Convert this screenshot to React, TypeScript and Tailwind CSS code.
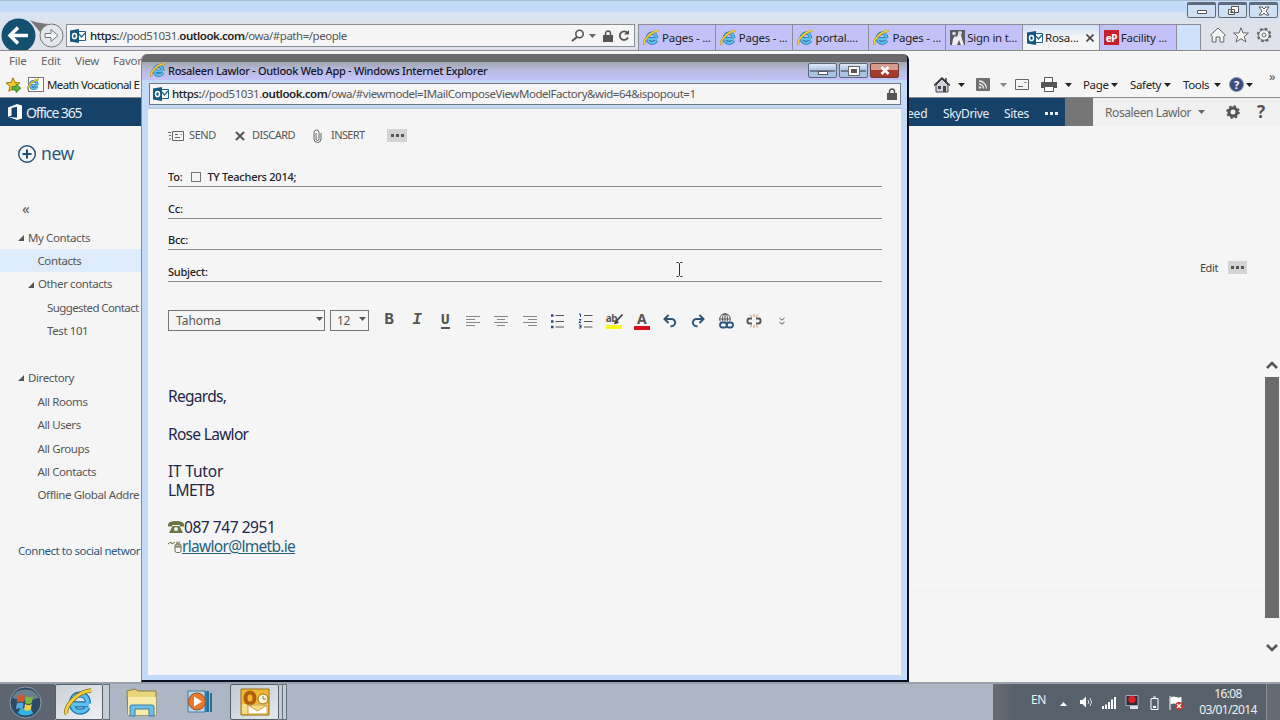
import React, { ReactNode } from "react";
import clsx from "clsx";

const Caret = ({ className = "" }: { className?: string }) => (
  <svg viewBox="0 0 7 4" className={clsx("w-[7px] h-1 shrink-0 fill-current", className)}>
    <path d="M0 0h7L3.5 4z" />
  </svg>
);

const IEIcon = ({ className = "" }: { className?: string }) => (
  <svg viewBox="0 0 32 32" className={clsx("shrink-0", className)} fill="none">
    <path d="M8.5 18.5H26M25.5 17.5c0-6-3.600-9.500-8.500-9.500S8.500 11.700 8.500 17s3.500 9.300 8.700 9.300c3.800 0 6.600-1.700 7.900-4.600" stroke="#1b6fa6" strokeWidth="6.500" />
    <path d="M8.500 18.500H26M25.500 17.500c0-6-3.600-9.500-8.500-9.500S8.500 11.700 8.500 17s3.500 9.300 8.700 9.300c3.800 0 6.600-1.700 7.900-4.600" stroke="#5cc0ee" strokeWidth="4" />
    <path d="M3 29C-1 24 12 5 29 3.500" stroke="#8a7420" strokeWidth="4.500" />
    <path d="M3 29C-1 24 12 5 29 3.500" stroke="#f3cf3c" strokeWidth="3" />
  </svg>
);

const OutlookIcon = () => (
  <svg viewBox="0 0 16 14" className="w-4 h-3.5 shrink-0">
    <path d="M8 2.500h7.500v9H8z" fill="#fff" stroke="#1c6390" />
    <path d="M9 5l2.500 3L15 4" fill="none" stroke="#1c6390" strokeWidth="1.200" />
    <path d="M0 1.500L9 0v14L0 12.500z" fill="#14587f" />
    <ellipse cx="4.500" cy="7" rx="2" ry="2.600" fill="none" stroke="#fff" strokeWidth="1.500" />
  </svg>
);

const Lock = () => (
  <svg viewBox="0 0 10 12" className="w-2.5 h-3 shrink-0">
    <path d="M2.500 6V3.500a2.500 2.500 0 015 0V6" fill="none" stroke="#555" strokeWidth="1.500" />
    <path d="M0 5h10v7H0z" fill="#555" />
  </svg>
);

const Dots = ({ className = "" }: { className?: string }) => (
  <span className={clsx("flex items-center justify-center gap-[2px]", className)}>
    <i className="size-[3px] bg-current" />
    <i className="size-[3px] bg-current" />
    <i className="size-[3px] bg-current" />
  </span>
);

const tabs = [
  { icon: "ie", label: "Pages - ..." },
  { icon: "ie", label: "Pages - ..." },
  { icon: "ie", label: "portal...." },
  { icon: "ie", label: "Pages - ..." },
  { icon: "people", label: "Sign in t..." },
  { icon: "outlook", label: "Rosa...", active: true },
  { icon: "ep", label: "Facility ..." },
];

function TabIcon({ icon }: { icon: string }) {
  if (icon === "ie") return <IEIcon className="w-[17px] h-[17px]" />;
  if (icon === "outlook") return <OutlookIcon />;
  if (icon === "people")
    return (
      <svg viewBox="0 0 15 15" className="w-[15px] h-[15px] shrink-0">
        <path d="M0 0h15v15H0z" fill="#5a5a62" />
        <path d="M2 15l1-6 2-3 2 1 1-3 3 1 1 4 2 6h-3l-2-5-2 5z" fill="#eee" />
        <circle cx="4" cy="3.500" r="1.800" fill="#ddd" />
        <circle cx="10" cy="3" r="2" fill="#ddd" />
      </svg>
    );
  return (
    <span className="w-[15px] h-[15px] shrink-0 bg-[#c5202c] text-white text-[10px] leading-[17px] font-bold text-center tracking-[-0.5px]">
      eP
    </span>
  );
}

function BrowserChrome() {
  return (
    <>
      <div className="h-3 border-t border-[#a9bccf] bg-[#c1dbf9]" />
      <div className="h-[39px] flex bg-gradient-to-b from-[#d6e3f3] to-[#dfe2ea] to-40% border-b border-[#8c8c8c]">
        <svg viewBox="0 0 66 38" className="w-[66px] h-[38px] shrink-0">
          <path d="M30 8c6 3 11 3 19 4l-9 8z" fill="#777" />
          <circle cx="18.500" cy="23.500" r="17" fill="#14506f" />
          <path d="M28 23.500H11M18 15.500l-8 8 8 8" fill="none" stroke="#fff" strokeWidth="3.500" />
          <circle cx="51.500" cy="23.500" r="11.500" fill="#e4e7ec" stroke="#777" />
          <path d="M45 21.500h6v-4l7 6-7 6v-4h-6z" fill="#f4f4f4" stroke="#777" />
        </svg>
        <div className="mt-3 w-[569px] h-[23px] border border-[#888e96] bg-[#f5f5f5] flex items-center pl-[3px] pr-[4px]">
          <OutlookIcon />
          <span className="ml-1 flex-1 text-[11.500px] text-[#555] tracking-[-0.480px]">
            <b className="font-medium text-[#222]">https:</b>//pod51031.<b className="font-semibold text-[#222]">outlook.com</b>/owa/#path=/people
          </span>
          <svg viewBox="0 0 14 13" className="w-3.5 h-[13px] shrink-0">
            <circle cx="8.500" cy="5" r="3.700" fill="none" stroke="#555" strokeWidth="1.600" />
            <path d="M6 8l-5 4" stroke="#555" strokeWidth="2" />
          </svg>
          <Caret className="ml-1 text-[#666]" />
          <span className="w-[7px]" />
          <Lock />
          <svg viewBox="0 0 12 12" className="ml-[5px] w-3 h-3 shrink-0" fill="none">
            <path d="M9.500 3A4.300 4.300 0 1010 7.500" stroke="#555" strokeWidth="1.800" />
            <path d="M6 4.500h5V0z" fill="#555" />
          </svg>
        </div>
        <div className="mt-3 ml-[3px] h-[26px] flex">
          {tabs.map((tab, i) => (
            <div
              key={i}
              className={clsx(
                "w-[76.800px] border-l border-t border-[#8c8c98] flex items-center pl-1",
                tab.active ? "bg-gradient-to-b from-[#cfe0f8] to-[#f5f5f5] to-50%" : "bg-[#c3c2f8]"
              )}
            >
              <TabIcon icon={tab.icon} />
              <span className="ml-[2px] text-[11.500px] text-[#222] tracking-[-0.250px] whitespace-nowrap">{tab.label}</span>
              {tab.active && (
                <svg viewBox="0 0 8 8" className="ml-auto mr-[5px] w-2 h-2 shrink-0">
                  <path d="M.5.5l7 7M7.500.5l-7 7" stroke="#444" strokeWidth="1.600" />
                </svg>
              )}
            </div>
          ))}
          <div className="w-[25px] border border-b-0 border-[#8c8c98] bg-[#cfe2fb]" />
        </div>
        <svg viewBox="0 0 66 16" className="mt-[15px] ml-[9px] w-[66px] h-4 shrink-0" fill="#f5f5f5" stroke="#666">
          <path d="M.7 8L8 1l7.300 7-1.500 1.200V15H10v-5H6v5H2.200V9.200z" />
          <path d="M31 .8l2 5.200h5.500l-4.300 3.500L36 15l-5-3.300L26 15l1.700-5.500L23.500 6H29z" />
          <circle cx="54" cy="8" r="6" strokeWidth="2.500" strokeDasharray="2.700 2" />
          <circle cx="54" cy="8" r="5.300" />
          <circle cx="54" cy="8" r="2" />
        </svg>
      </div>
      <div className="h-[22px] flex items-center pl-[9px] pb-[2px] bg-[#f5f5f5] text-[11.500px] text-[#666] tracking-[-0.250px]">
        <span className="w-8">File</span>
        <span className="w-[34px]">Edit</span>
        <span className="w-[38px]">View</span>
        <span>Favor</span>
      </div>
      <div className="h-[25px] flex items-center pb-px bg-[#f5f5f5] border-b border-[#8a8a8a] text-[11.500px] text-[#222] tracking-[-0.350px]">
        <svg viewBox="0 0 16 16" className="ml-[5px] w-4 h-4 shrink-0">
          <path d="M8 .8l2 4.700 5 .4-4 3.400 1.200 5L8 11.700 3.800 14.300 5 9.300 1 5.900l5-.4z" fill="#f4c933" stroke="#97760f" />
          <path d="M7 9.500h4V7l5 4.200-5 4.300V13H7z" fill="#56b33c" stroke="#2f7220" strokeWidth=".7" />
        </svg>
        <span className="ml-[7px] w-4 h-[15px] bg-white border border-[#777] flex items-center">
          <IEIcon className="w-[13px] h-[13px] -ml-0.5" />
        </span>
        <span className="ml-[3px] w-[95px] whitespace-nowrap tracking-[-0.600px]">Meath Vocational E</span>
        <svg viewBox="0 0 16 16" className="ml-[792px] w-4 h-4 shrink-0">
          <path d="M2 8l6-6 6 6v7H2z" fill="#cfd2dc" stroke="#444" />
          <path d="M0 8.500L8 1l8 7.500M12 1v4" fill="none" stroke="#333" strokeWidth="1.500" />
          <path d="M9 9h3v6H9zM4 9h3v3H4z" fill="#444" />
        </svg>
        <Caret className="ml-2 text-[#222]" />
        <svg viewBox="0 0 14 13" className="ml-[11px] w-3.5 h-[13px] shrink-0" fill="none" stroke="#eee">
          <rect width="14" height="13" rx="1" fill="#707070" stroke="none" />
          <path d="M3 6a4.500 4.500 0 014.500 4.500M3 3a7.500 7.500 0 017.500 7.500" strokeWidth="1.300" />
          <circle cx="4" cy="9.500" r=".8" fill="#eee" />
        </svg>
        <Caret className="ml-[10px] text-[#888]" />
        <svg viewBox="0 0 14 11" className="ml-2 w-3.5 h-[11px] shrink-0" fill="none" stroke="#666">
          <path d="M.5.5h13v10H.5zM3 7.500h5M9.500 3.500h2" />
        </svg>
        <svg viewBox="0 0 16 15" className="ml-3 w-4 h-[15px] shrink-0">
          <path d="M3.500.5h8v5h-8z" fill="#fff" stroke="#555" />
          <path d="M0 5h16v6H0z" fill="#555" />
          <path d="M3.500 9.500h9v5h-9z" fill="#fff" stroke="#555" />
        </svg>
        <Caret className="ml-2" />
        <span className="ml-[11px] w-[28px]">Page</span>
        <Caret />
        <span className="ml-3 w-[34px]">Safety</span>
        <Caret />
        <span className="ml-3 w-[31px]">Tools</span>
        <Caret />
        <span className="ml-2 size-[15px] rounded-full bg-[#3b4d80] border border-[#8a93a8] text-white text-[11px] leading-[13px] font-bold text-center">?</span>
        <Caret className="ml-[2px]" />
        <span className="ml-4 -mt-4 text-[13px] text-[#555]">»</span>
      </div>
    </>
  );
}

function SuiteBar() {
  return (
    <div className="h-7 flex bg-[#f0f0f0] text-[12px]">
      <div className="w-[1065px] pt-[3px] bg-[#16426a] text-[#e8eef4] flex items-center">
        <svg viewBox="0 0 14 16" className="ml-2 mb-[3px] w-3.5 h-4 shrink-0">
          <path d="M0 3.500L9 0l5 1.500v13L9 16 0 12.700l9 1V2.800L3.500 4v7.500L0 12.700z" fill="#fff" />
        </svg>
        <span className="ml-1 mb-[2px] w-[877px] text-[14px] tracking-[-1.100px]">Office 365</span>
        <span className="ml-1 w-[36px] tracking-[-0.200px]">eed</span>
        <span className="w-[61px] tracking-[-0.350px]">SkyDrive</span>
        <span className="w-[41px] tracking-[-0.300px]">Sites</span>
        <Dots />
      </div>
      <div className="w-7 bg-[#767676]" />
      <span className="ml-3 w-[93px] leading-[29px] text-[12px] text-[#666] tracking-[-0.400px]">Rosaleen Lawlor</span>
      <Caret className="mt-3 text-[#666]" />
      <svg viewBox="0 0 14 14" className="mt-[7px] ml-[21px] w-3.5 h-3.5 shrink-0" fill="none" stroke="#555">
        <circle cx="7" cy="7" r="4" strokeWidth="3" />
        <circle cx="7" cy="7" r="5.800" strokeWidth="2" strokeDasharray="2.300 2.250" />
      </svg>
      <span className="ml-[17px] text-[17px] leading-[27px] font-bold text-[#555]">?</span>
    </div>
  );
}

interface FolderRow {
  label?: string;
  indent: string;
  header?: boolean;
  selected?: boolean;
}

const folders: FolderRow[] = [
  { label: "My Contacts", indent: "pl-[18px]", header: true },
  { label: "Contacts", indent: "pl-[37.500px]", selected: true },
  { label: "Other contacts", indent: "pl-7", header: true },
  { label: "Suggested Contact", indent: "pl-[47px]" },
  { label: "Test 101", indent: "pl-[47px]" },
  { indent: "" },
  { label: "Directory", indent: "pl-[18px]", header: true },
  { label: "All Rooms", indent: "pl-[37.500px]" },
  { label: "All Users", indent: "pl-[37.500px]" },
  { label: "All Groups", indent: "pl-[37.500px]" },
  { label: "All Contacts", indent: "pl-[37.500px]" },
  { label: "Offline Global Addre", indent: "pl-[37.500px]" },
];

function Sidebar() {
  return (
    <div className="w-[141px] whitespace-nowrap flex flex-col text-[11.500px] tracking-[-0.400px] text-[#555]">
      <div className="mt-3 ml-[18px] h-8 flex items-center text-[#2c5a7c]">
        <svg viewBox="0 0 18 18" className="w-[18px] h-[18px]" fill="none" stroke="#1c5078">
          <circle cx="9" cy="9" r="8.300" strokeWidth="1.400" />
          <path d="M9 4.500v9M4.500 9h9" strokeWidth="2" />
        </svg>
        <span className="ml-[5px] mb-[2px] text-[17.500px] tracking-[-0.400px]">new</span>
      </div>
      <span className="mt-[28px] ml-[22px] h-[22px] text-[15px] leading-[20px]">«</span>
      <div className="mt-[5.500px]">
        {folders.map((f, i) => (
          <div
            key={i}
            className={clsx(
              "h-[23.450px] flex items-center",
              f.indent,
              f.selected && "bg-[#deebfa]",
              f.label === "Suggested Contact" && "tracking-[-0.600px]"
            )}
          >
            {f.header && (
              <svg viewBox="0 0 6 6" className="w-1.5 h-1.5 mr-1 mt-px fill-[#555]">
                <path d="M6 0v6H0z" />
              </svg>
            )}
            {f.label}
          </div>
        ))}
      </div>
      <span className="mt-[35px] ml-[18px] text-[#2c5a7c] tracking-[-0.480px]">Connect to social networ</span>
    </div>
  );
}

function ContactPane() {
  return (
    <div className="flex-1 flex">
      <div className="flex-1 flex flex-col">
        <div className="h-[268px] pt-[133px] flex justify-end border-b border-[#f1f1f1]">
          <span className="text-[11px] leading-[17px] tracking-[-0.400px] text-[#444]">Edit</span>
          <Dots className="ml-[10px] mr-[17px] w-[19px] h-[13px] bg-[#d4d4d4] text-[#555] mt-[2px]" />
        </div>
        {[0, 1, 2, 3, 4].map((i) => (
          <div key={i} className="h-[49.500px] border-b border-[#f1f1f1]" />
        ))}
      </div>
      <div className="w-4 flex flex-col items-center pt-[235px]">
        <svg viewBox="0 0 12 8" className="w-3 h-2">
          <path d="M1 7l5-5 5 5" fill="none" stroke="#555" strokeWidth="2.600" />
        </svg>
        <div className="mt-2 w-3.5 h-[241px] bg-[#6b6b6b]" />
        <svg viewBox="0 0 12 8" className="mt-[26px] w-3 h-2">
          <path d="M1 1l5 5 5-5" fill="none" stroke="#555" strokeWidth="2.600" />
        </svg>
      </div>
    </div>
  );
}

function Taskbar() {
  return (
    <div className="h-[38px] flex border-t-2 border-[#98a0aa] bg-[#acb6c4]">
      <div className="w-[55px] bg-[#5c6570] flex items-center justify-center">
        <svg viewBox="0 0 34 34" className="ml-[-4px] w-[33px] h-[33px]">
          <circle cx="17" cy="17" r="16" fill="#2b4a63" stroke="#93a1ad" />
          <path d="M3 12a15 13 0 0128 0q-14 6-28 0z" fill="#8596a4" opacity=".7" />
          <path d="M9 28a16 16 0 0016 0l-3-5H12z" fill="#2fb4e3" />
          <path d="M9 10q4-2 7 0l-1 7q-4-2-7 0z" fill="#d9572b" />
          <path d="M17.500 10.500q4 2 7 0l-1 7q-4 2-7 0z" fill="#83b63c" />
          <path d="M8 18q4-2 7 0l-1 6q-4-2-7 0z" fill="#55a7dd" />
          <path d="M16.500 18.500q4 2 7 0l-1 6q-4 2-7 0z" fill="#f1cd4c" />
        </svg>
      </div>
      <div className="w-12 border border-[#555e69] rounded-xs bg-gradient-to-br from-[#cbd1d9] to-[#eef1f5] flex items-center justify-center">
        <IEIcon className="w-[30px] h-[30px]" />
      </div>
      <div className="w-[7px] border border-l-0 border-[#66707c] bg-[#c4ccd7]" />
      <svg viewBox="0 0 32 30" className="ml-4 mt-1 w-8 h-[30px] shrink-0">
        <path d="M1 3l8-2 3 2h18v24H2z" fill="#e9d57a" stroke="#8f7d39" />
        <path d="M2 9h28v18H2z" fill="#f7ecaa" />
        <path d="M4 28v-9q0-2 2-2h20q2 0 2 2v9h-5v-7H9v7z" fill="#70bde6" stroke="#3c7da3" />
      </svg>
      <svg viewBox="0 0 28 26" className="ml-[28px] mt-[5px] w-7 h-[26px] shrink-0">
        <path d="M8 2h14v21H8z" fill="#2f7fae" />
        <path d="M22 2v21M25 4v19" stroke="#2c6d98" strokeWidth="2" />
        <path d="M2 2h17v21H2z" fill="#b9d9ea" stroke="#3c7da3" />
        <circle cx="11" cy="12.500" r="8.500" fill="#e77a2c" stroke="#a64e17" />
        <path d="M8 7.500l8 5-8 5z" fill="#fff" />
      </svg>
      <div className="ml-[16px] w-[49px] border border-[#555e69] rounded-xs bg-gradient-to-br from-[#c3cad3] to-[#e4e8ee] flex items-center justify-center">
        <svg viewBox="0 0 30 28" className="w-[30px] h-7">
          <path d="M1 1h28v26H1z" fill="#f0b935" stroke="#9a6f10" />
          <path d="M2 16h26v10H2z" fill="#f8dc85" />
          <ellipse cx="10" cy="10" rx="4.500" ry="5.500" fill="none" stroke="#b35c0c" strokeWidth="4" />
          <circle cx="23" cy="11" r="5" fill="#fff4d4" stroke="#9a6f10" />
          <path d="M23 8v3h3" fill="none" stroke="#775" />
          <path d="M8 17h19v9H8zM8 17l9.500 6L27 17" fill="#fff" stroke="#c99a3c" />
        </svg>
      </div>
      <div className="w-1 border-y border-r border-[#66707c] bg-[#c4ccd7]" />
      <div className="w-1 border-y border-r border-[#66707c] bg-[#c4ccd7]" />
      <div className="ml-auto w-[287px] flex items-center bg-gradient-to-r from-[#6b6c70] to-[#57616c] to-8% text-[#eef0f2]">
        <span className="ml-[38px] mb-1 w-[29px] text-[12px] tracking-[-0.400px]">EN</span>
        <svg viewBox="0 0 7 4" className="w-[7px] h-1 fill-white mt-1">
          <path d="M0 4h7L3.500 0z" />
        </svg>
        <svg viewBox="0 0 14 12" className="ml-[13px] w-3.5 h-3 shrink-0" fill="none" stroke="#ddd">
          <path d="M0 4h2.500L6 .5v11L2.500 8H0z" fill="#fff" stroke="none" />
          <path d="M8 4q1.500 2 0 4M10 2q3 4 0 8" />
        </svg>
        <svg viewBox="0 0 14 12" className="ml-2 mt-px w-3.5 h-3 shrink-0" fill="#fff">
          <path d="M0 9h2v3H0zM3 7.500h2V12H3zM6 5h2v7H6zM9 2.500h2V12H9zM12 0h2v12h-2z" />
        </svg>
        <svg viewBox="0 0 14 14" className="ml-[9px] w-3.5 h-3.5 shrink-0">
          <path d="M1 .5h12v10H1z" fill="#222c3c" stroke="#aab" />
          <circle cx="7" cy="4.500" r="3.700" fill="#e02028" />
          <path d="M5 11h8v3H5z" fill="#dde" />
        </svg>
        <svg viewBox="0 0 9 14" className="ml-[11px] mt-px w-[9px] h-3.5 shrink-0" fill="none" stroke="#fff">
          <path d="M1 2.500h7v11H1zM3 1h3" />
          <path d="M3 11h3" strokeWidth="2" />
        </svg>
        <svg viewBox="0 0 14 14" className="ml-[10px] mt-px w-3.5 h-3.5 shrink-0">
          <path d="M1 0v14M2 1.500q3-1 5 0t5 0v6q-3 1-5 0t-5 0z" fill="#fff" stroke="#fff" />
          <circle cx="10" cy="10" r="4" fill="#cf2e2e" />
          <path d="M8 8l4 4M12 8l-4 4" stroke="#fff" strokeWidth="1.300" />
        </svg>
        <div className="ml-[15px] w-[60px] text-center text-[12px] leading-[16px] tracking-[-0.650px] whitespace-nowrap">
          <div>16:08</div>
          <div>03/01/2014</div>
        </div>
        <div className="ml-auto w-3.5 h-full border-l border-[#8a919a] bg-[#666b73]" />
      </div>
    </div>
  );
}

const Glyph = ({ children }: { children: ReactNode }) => (
  <svg viewBox="0 0 16 16" className="w-4 h-4" fill="none" stroke="#555">
    {children}
  </svg>
);

const formatTools: ReactNode[] = [
  <b className="text-[16px] leading-[16px]">B</b>,
  <b className="text-[16px] leading-[16px] italic">I</b>,
  <b className="mt-[3px] text-[15px] leading-[13px] border-b-2 border-[#555]">U</b>,
  <Glyph><path d="M1 3.500h14M1 6.500h9M1 9.500h14M1 12.500h9" stroke="#888" /></Glyph>,
  <Glyph><path d="M1 3.500h14M4 6.500h8M1 9.500h14M4 12.500h8" stroke="#888" /></Glyph>,
  <Glyph><path d="M1 3.500h14M6 6.500h9M1 9.500h14M6 12.500h9" stroke="#888" /></Glyph>,
  <Glyph>
    <path d="M5.500 2.500H14M5.500 8.500H14M5.500 14H14" />
    <path d="M1 2.500h2.500M1 8.500h2.500M1 14h2.500" stroke="#2b4c7a" strokeWidth="2.500" />
  </Glyph>,
  <Glyph>
    <path d="M6 2.500h8.500M6 8.500h8.500M6 14h8.500" />
    <path d="M1 1h1.500v3M1 6.500h2L1 9.500h2M1 12h2v3H1M1.500 13.500H3" stroke="#2b4c7a" />
  </Glyph>,
  <span className="w-4 h-4 relative flex flex-col">
    <b className="text-[10px] leading-[11px] tracking-[-0.500px]">ab</b>
    <i className="h-[4px] mt-px bg-[#f7f71c]" />
    <svg viewBox="0 0 9 10" className="absolute right-[-1px] top-[1px] w-[9px] h-2.5">
      <path d="M8.500.5L3 6.500 1 9.500 4.500 8" fill="none" stroke="#444" strokeWidth="1.700" />
    </svg>
  </span>,
  <span className="w-4 h-4 flex flex-col items-center">
    <b className="text-[14px] leading-[12px]">A</b>
    <i className="mt-px h-[4px] w-4 shrink-0 bg-[#d4101c]" />
  </span>,
  <Glyph><path d="M6.500 2L2.500 6l4 4M3 6h6.500a3.600 3.600 0 010 7.200H8.500" stroke="#2f5573" strokeWidth="2" /></Glyph>,
  <Glyph><path d="M9.500 2l4 4-4 4M13 6H6.500a3.600 3.600 0 000 7.200h1" stroke="#2f5573" strokeWidth="2" /></Glyph>,
  <Glyph>
    <circle cx="7" cy="6" r="5.300" />
    <path d="M1.700 6h10.600M7 .7v10.600" />
    <ellipse cx="7" cy="6" rx="2.500" ry="5.300" />
    <path d="M1 8.500h15V16H1z" fill="#f5f5f5" stroke="none" />
    <rect x="2" y="9.500" width="7" height="5" rx="2.500" stroke="#2b5680" strokeWidth="1.800" />
    <rect x="8.500" y="9.500" width="6.500" height="5" rx="2.500" stroke="#2b5680" strokeWidth="1.800" />
  </Glyph>,
  <Glyph>
    <path d="M6 5.500H3.500a2 2 0 00-2 2v1a2 2 0 002 2H6M10 5.500h2.500a2 2 0 012 2v1a2 2 0 01-2 2H10" strokeWidth="2" />
    <path d="M8 1v3M4 1.500L6 4M12 1.500L10 4M8 15v-3M4 14.500L6 12M12 14.500L10 12" stroke="#d08a66" />
  </Glyph>,
  <Glyph><path d="M5.500 5L8 7.200 10.500 5M5.500 9L8 11.200 10.500 9" /></Glyph>,
];

function ComposeWindow() {
  return (
    <div className="absolute left-[141px] top-[54px] w-[768px] h-[628px] flex flex-col rounded-t-md overflow-hidden border-l border-l-[#848b94] border-r-2 border-b-2 border-r-[#0a1024] border-b-[#0a1024] bg-[#c3dbf8]">
      <div className="h-2 bg-[#6a6a6c]" />
      <div className="h-[18px] shrink-0 flex bg-gradient-to-b from-[#a2a7b0] via-[#b9bce0] to-[#c3c3fb] pl-[8px] pr-2">
        <IEIcon className="w-4 h-4" />
        <span className="ml-[2px] flex-1 text-[11px] leading-[17px] font-medium tracking-[-0.300px] text-[#15152a]">
          Rosaleen Lawlor - Outlook Web App - Windows Internet Explorer
        </span>
        <div className="mt-px h-[15px] flex gap-[2px]">
          <div className="w-[29px] border border-[#5d6878] rounded-xs bg-gradient-to-b from-[#dfe9f5] to-[#a9c4e2] to-50% flex items-end justify-center pb-[2px] relative">
            <i className="absolute left-px right-px top-[6px] h-[2px] bg-[#6d7c8e]" />
            <i className="relative w-2.5 h-1 bg-white border border-[#555]" />
          </div>
          <div className="w-[29px] border border-[#5d6878] rounded-xs bg-gradient-to-b from-[#dfe9f5] to-[#a9c4e2] to-50% flex items-center justify-center relative">
            <i className="absolute left-px right-px top-[6px] h-[2px] bg-[#6d7c8e]" />
            <i className="relative w-2.5 h-2 bg-[#555] border-2 border-white outline outline-[#666]" />
          </div>
          <div className="w-[29px] border border-[#6b3a36] rounded-xs bg-gradient-to-b from-[#d49b8f] from-45% to-[#a33c2c] to-50% flex items-center justify-center">
            <svg viewBox="0 0 10 9" className="w-2.5 h-[9px]">
              <path d="M1.500 1l7 7M8.500 1l-7 7" stroke="#fff" strokeWidth="2.600" />
            </svg>
          </div>
        </div>
      </div>
      <div className="mt-[3px] ml-[7px] mr-1.5 h-[22px] shrink-0 border border-[#6f7986] bg-[#f5f5f5] flex items-center pl-[3px] pr-[3px]">
        <OutlookIcon />
        <span className="ml-[3px] flex-1 text-[11.500px] text-[#555] tracking-[-0.450px]">
          <b className="font-medium text-[#222]">https:</b>//pod51031.<b className="font-semibold text-[#222]">outlook.com</b>/owa/#viewmodel=IMailComposeViewModelFactory&amp;wid=64&amp;ispopout=1
        </span>
        <Lock />
      </div>
      <div className="mt-[2px] mx-1.5 mb-[5px] flex-1 border-t-2 border-[#bcd0dd] bg-[#f5f5f5] pl-5 pr-[19px]">
        <div className="h-[46px] pt-[7px] flex items-center text-[11px] text-[#555] tracking-[-0.400px]">
          <svg viewBox="0 0 16 10" className="w-4 h-2.5 shrink-0" fill="none" stroke="#666">
            <path d="M4.500.5h11v9h-11zM7 3.500h3M7 6.500h5M12.500 3.500h1" />
            <path d="M0 1.500h3M1 4.500h2M1 8h2" />
          </svg>
          <span className="ml-[5px] w-[46px]">SEND</span>
          <svg viewBox="0 0 10 10" className="w-2.5 h-2.5 shrink-0">
            <path d="M1 1l8 8M9 1L1 9" stroke="#555" strokeWidth="2" />
          </svg>
          <span className="ml-[7px] w-[61px] tracking-[-0.500px]">DISCARD</span>
          <svg viewBox="0 0 9 14" className="w-[9px] h-3.5 shrink-0" fill="none" stroke="#666">
            <path d="M3 4v6a1.500 1.500 0 003 0V3.500a2.500 2.500 0 00-5 0V10a3.400 3.400 0 007 0V4" />
          </svg>
          <span className="ml-[9px] w-[56px] tracking-[-0.600px]">INSERT</span>
          <Dots className="w-5 h-[13px] bg-[#d4d4d4]" />
        </div>
        {["To:", "Cc:", "Bcc:", "Subject:"].map((label) => (
          <div key={label} className="h-[31.800px] flex items-end border-b border-[#8c8c8c] text-[11px] leading-[18px] font-medium tracking-[-0.250px] text-[#222]">
            {label}
            {label === "To:" && (
              <>
                <span className="ml-[9px] mb-1 size-[10px] border border-[#777]" />
                <span className="ml-1.5">TY Teachers 2014;</span>
              </>
            )}
          </div>
        ))}
        <div className="mt-7 h-[21px] flex text-[12px] text-[#555]">
          <div className="w-[157px] border border-[#777] flex items-center pl-[7px] pr-[1px]">
            <span className="flex-1">Tahoma</span>
            <Caret className="mb-1" />
          </div>
          <div className="ml-[5px] w-[39px] border border-[#777] flex items-center pl-[6px] pr-[2px]">
            <span className="flex-1 tracking-[-0.300px]">12</span>
            <Caret className="mb-1" />
          </div>
          <div className="ml-[6px] flex">
            {formatTools.map((tool, i) => (
              <span
                key={i}
                className={clsx("w-[28.100px] flex items-center justify-center", i < 3 && "font-['Liberation_Mono',monospace] pb-px")}
              >
                {tool}
              </span>
            ))}
          </div>
        </div>
        <div className="mt-[56px] text-[15.500px] leading-[18.700px] tracking-[-0.700px] text-[#23254a]">
          <p>Regards,</p>
          <br />
          <p>Rose Lawlor</p>
          <br />
          <p className="tracking-[-0.200px]">IT Tutor</p>
          <p className="tracking-[-0.650px]">LMETB</p>
          <br />
          <p className="flex items-center">
            <svg viewBox="0 0 16 12" className="w-4 h-3 shrink-0 fill-[#6c7642]">
              <path d="M0 4q0-4 8-4t8 4v1.500h-4V4H4v1.500H0zM4.500 5h7l3.500 7H1z" />
              <circle cx="8" cy="8" r="2" fill="#f5f5f5" />
            </svg>
            <span className="tracking-[-0.450px]">087 747 2951</span>
          </p>
          <p className="flex items-center">
            <svg viewBox="0 0 14 13" className="w-3.5 h-[13px] shrink-0" fill="none" stroke="#6c6c48">
              <path d="M0 4l3-2 1 2 3-2M8.500 4h3q1.500 0 1.500 2v4.500q0 2-1.500 2h-3q-1.500 0-1.500-2V6q0-2 1.500-2zM7 7h6M9 1.500v5.500M11 1.500v5.500" />
            </svg>
            <a className="underline text-[#27617f]">rlawlor@lmetb.ie</a>
          </p>
        </div>
      </div>
    </div>
  );
}

export default function App() {
  return (
    <div className="relative w-[1280px] h-[720px] overflow-hidden flex flex-col bg-[#f5f5f5] font-['Noto_Sans','Open_Sans',sans-serif]">
      <BrowserChrome />
      <SuiteBar />
      <div className="flex-1 min-h-0 flex">
        <Sidebar />
        <ContactPane />
      </div>
      <Taskbar />

      {/* main window caption buttons */}
      <div className="absolute top-[2px] right-[2px] h-4 flex gap-[2px]">
        {["min", "max", "close"].map((kind) => (
          <div key={kind} className="w-[29px] border border-t-[3px] border-[#5f6b7b] rounded-xs bg-[#cfe0f5] flex items-center justify-center">
            <svg viewBox="0 0 12 10" className="w-3 h-2.5" fill="#fff" stroke="#555">
              {kind === "min" && <path d="M1.500 4.500h9v3h-9z" />}
              {kind === "max" && <path d="M4.500.5h7v6h-7zM1.500 3.500h6v5h-6zM3.500 5.500h2v1h-2z" />}
              {kind === "close" && <path d="M1 1h3l2 2 2-2h3L8 5l3 4H8L6 7 4 9H1l3-4z" />}
            </svg>
          </div>
        ))}
      </div>

      <ComposeWindow />

      {/* text cursor */}
      <svg viewBox="0 0 7 15" className="absolute left-[676px] top-[262px] w-[7px] h-[15px]" fill="none" stroke="#333">
        <path d="M.5.5h2l1 1 1-1h2M3.500 1.500v12M.5 14.500h2l1-1 1 1h2" />
      </svg>
    </div>
  );
}
